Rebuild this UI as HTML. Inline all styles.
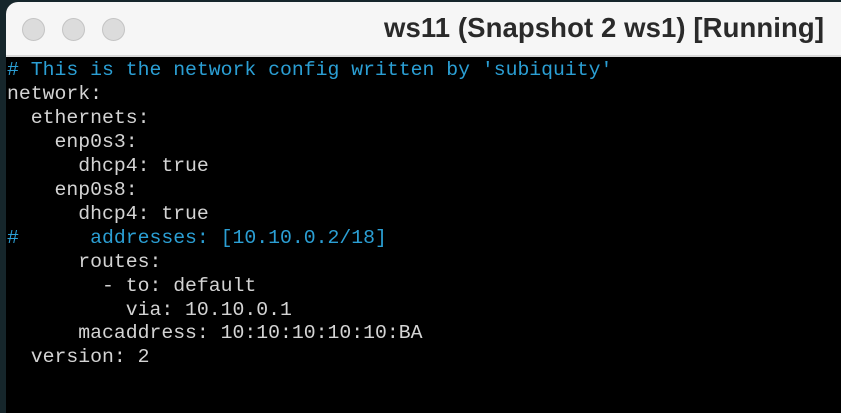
<!DOCTYPE html>
<html><head><meta charset="utf-8"><style>
html,body{margin:0;padding:0;width:841px;height:413px;overflow:hidden;background:#16262b;}
.win{position:absolute;left:6px;top:2px;width:840px;height:411px;background:#000;border-radius:12px 0 0 0;overflow:hidden;}
.tb{position:absolute;left:0;top:0;right:0;height:53px;background:#f6f6f6;border-bottom:2px solid #d8d8d8;}
.dot{position:absolute;top:16px;width:23px;height:23px;border-radius:50%;background:#dcdcdc;border:1px solid #c4c4c4;box-sizing:border-box;}
.title{position:absolute;left:378px;top:10px;font:bold 27.5px "Liberation Sans",sans-serif;letter-spacing:0.1px;color:#2a2a2a;white-space:nowrap;}
pre{position:absolute;left:1px;top:57px;margin:0;font:19.8px/23.95px "Liberation Mono",monospace;color:#d4d4d4;}
.c{color:#2b9fd4;}
</style></head><body>
<div class="win">
<div class="tb">
<div class="dot" style="left:16px"></div>
<div class="dot" style="left:56px"></div>
<div class="dot" style="left:96px"></div>
<div class="title">ws11 (Snapshot 2 ws1) [Running]</div>
</div>
<pre><span class="c"># This is the network config written by 'subiquity'</span>
network:
  ethernets:
    enp0s3:
      dhcp4: true
    enp0s8:
      dhcp4: true
<span class="c">#      addresses: [10.10.0.2/18]</span>
      routes:
        - to: default
          via: 10.10.0.1
      macaddress: 10:10:10:10:10:BA
  version: 2</pre>
</div>
</body></html>
